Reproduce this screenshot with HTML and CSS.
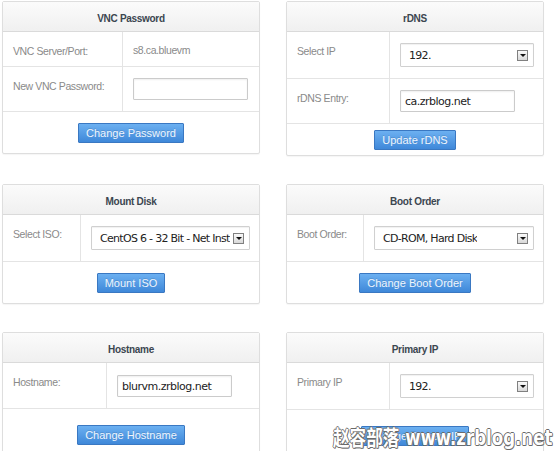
FILE: index.html
```html
<!DOCTYPE html>
<html lang="en">
<head>
<meta charset="utf-8">
<title>VPS Controls</title>
<link rel="stylesheet" href="styles.css">
</head>
<body>
<div class="page">
  <section class="panel panel--vnc">
    <h2 class="panel-head">VNC Password</h2>
    <div class="row">
      <div class="label">VNC Server/Port:</div>
      <div class="value value--text">s8.ca.bluevm</div>
    </div>
    <div class="row">
      <div class="label">New VNC Password:</div>
      <div class="value"><input class="field" type="password"></div>
    </div>
    <div class="actions"><button class="btn">Change Password</button></div>
  </section>

  <section class="panel panel--rdns">
    <h2 class="panel-head">rDNS</h2>
    <div class="row">
      <div class="label">Select IP</div>
      <div class="value"><div class="select"><span class="select-text">192.</span><span class="arrow"></span></div></div>
    </div>
    <div class="row">
      <div class="label">rDNS Entry:</div>
      <div class="value"><input class="field" type="text" value="ca.zrblog.net"></div>
    </div>
    <div class="actions actions--tight"><button class="btn">Update rDNS</button></div>
  </section>

  <section class="panel panel--iso">
    <h2 class="panel-head">Mount Disk</h2>
    <div class="row">
      <div class="label">Select ISO:</div>
      <div class="value"><div class="select"><span class="select-text">CentOS 6 - 32 Bit - Net Inst</span><span class="arrow"></span></div></div>
    </div>
    <div class="actions"><button class="btn">Mount ISO</button></div>
  </section>

  <section class="panel panel--boot">
    <h2 class="panel-head">Boot Order</h2>
    <div class="row">
      <div class="label">Boot Order:</div>
      <div class="value"><div class="select"><span class="select-text">CD-ROM, Hard Disk</span><span class="arrow"></span></div></div>
    </div>
    <div class="actions"><button class="btn">Change Boot Order</button></div>
  </section>

  <section class="panel panel--host">
    <h2 class="panel-head">Hostname</h2>
    <div class="row">
      <div class="label">Hostname:</div>
      <div class="value value--tall"><input class="field" type="text" value="blurvm.zrblog.net"></div>
    </div>
    <div class="actions actions--low"><button class="btn">Change Hostname</button></div>
  </section>

  <section class="panel panel--ip">
    <h2 class="panel-head">Primary IP</h2>
    <div class="row">
      <div class="label">Primary IP</div>
      <div class="value"><div class="select"><span class="select-text">192.</span><span class="arrow"></span></div></div>
    </div>
    <div class="actions actions--low"><button class="btn">Change Primary IP</button></div>
  </section>
</div>
<div class="watermark">赵容部落 www.zrblog.net</div>
</body>
</html>
```
FILE: styles.css
```css
html, body {
  margin: 0;
  padding: 0;
  overflow: hidden;
  background: #ffffff;
}

body {
  font-family: "Liberation Sans", Arial, sans-serif;
  width: 555px;
  height: 451px;
  position: relative;
}

.page {
  display: grid;
  grid-template-columns: 258px 258px;
  column-gap: 26px;
  row-gap: 28px;
  align-items: start;
  padding: 1px 0 0 2px;
}

.panel {
  box-sizing: border-box;
  border: 1px solid #dedede;
  border-radius: 2px;
  background: #fff;
  box-shadow: 0 1px 1px rgba(0, 0, 0, 0.04);
  --label: 120px;
}

.panel--vnc { --label: 120px; }
.panel--rdns { --label: 103px; }
.panel--iso { --label: 78px; }
.panel--boot { --label: 77px; }
.panel--host { --label: 104px; }
.panel--ip { --label: 103px; }

.panel-head {
  box-sizing: border-box;
  margin: 0;
  height: 30px;
  padding-top: 3px;
  line-height: 27px;
  text-align: center;
  font-size: 10px;
  font-weight: bold;
  letter-spacing: -0.3px;
  color: #3b4650;
  background: linear-gradient(#fbfbfb, #f0f0f0);
  border-bottom: 1px solid #dadada;
}

.row {
  display: flex;
  border-bottom: 1px solid #e4e4e4;
}

.label {
  box-sizing: border-box;
  flex: none;
  width: var(--label);
  padding: 12px 6px 0 10px;
  border-right: 1px solid #e4e4e4;
  font-size: 10.5px;
  letter-spacing: -0.4px;
  line-height: 14px;
  color: #8a8a8a;
  white-space: nowrap;
}

.value {
  flex: 1;
  min-width: 0;
  padding: 11px 9px 11px 10px;
}

.value--tall {
  padding: 12px 9px 11px 10px;
}

.value--text {
  padding: 12px 10px 10px 10px;
  font-size: 10.5px;
  letter-spacing: -0.4px;
  line-height: 12px;
  color: #8a8a8a;
}

.field {
  display: block;
  box-sizing: border-box;
  width: 115px;
  height: 22px;
  margin: 0;
  padding: 0 4px;
  border: 1px solid #cbcbcb;
  border-radius: 1px;
  box-shadow: inset 0 1px 2px rgba(0, 0, 0, 0.07);
  font-family: "DejaVu Sans", Verdana, sans-serif;
  font-size: 11px;
  letter-spacing: -0.5px;
  color: #222;
  background: #fff;
}

.select {
  box-sizing: border-box;
  height: 24px;
  display: flex;
  align-items: center;
  justify-content: space-between;
  gap: 1px;
  padding: 0 5px 0 8px;
  border: 1px solid #d0d0d0;
  border-radius: 1px;
  box-shadow: inset 0 1px 1px rgba(0, 0, 0, 0.06);
  font-family: "DejaVu Sans", Verdana, sans-serif;
  font-size: 11px;
  letter-spacing: -0.7px;
  color: #222;
  white-space: nowrap;
}

.select-text {
  min-width: 0;
  overflow: hidden;
}

.arrow {
  box-sizing: border-box;
  flex: none;
  width: 11px;
  height: 11px;
  display: flex;
  align-items: center;
  justify-content: center;
  border: 1px solid #808080;
  background: linear-gradient(#fafafa, #d8d8d8);
}

.arrow::after {
  content: "";
  width: 0;
  height: 0;
  margin-top: 1px;
  border-left: 3px solid transparent;
  border-right: 3px solid transparent;
  border-top: 3px solid #111;
}

.actions {
  text-align: center;
  padding: 11px 0 10px;
}

.actions--tight {
  padding: 6px 0 5px;
}

.actions--low {
  padding: 16px 0 10px;
}

.btn {
  box-sizing: border-box;
  height: 20px;
  margin: 0;
  padding: 0 7px;
  border: 1px solid #3a78c2;
  border-radius: 1px;
  background: linear-gradient(#6cb0f1, #3f88d9);
  color: #eef5fd;
  font-family: "Liberation Sans", Arial, sans-serif;
  font-size: 11px;
  line-height: 18px;
  text-shadow: 0 -1px 0 rgba(0, 0, 0, 0.12);
  cursor: pointer;
}

.watermark {
  position: absolute;
  left: 333px;
  top: 426px;
  white-space: nowrap;
  font-family: "DejaVu Sans", "Noto Sans CJK SC", sans-serif;
  font-weight: bold;
  font-size: 21px;
  line-height: 24px;
  color: #ffffff;
  text-shadow: 1px 0 0 #6a6a6a, -1px 0 0 #6a6a6a, 0 1px 0 #6a6a6a, 0 -1px 0 #6a6a6a, 1px 1px 0 #8a8a8a;
  transform: scaleX(0.79);
  transform-origin: left top;
}
```
